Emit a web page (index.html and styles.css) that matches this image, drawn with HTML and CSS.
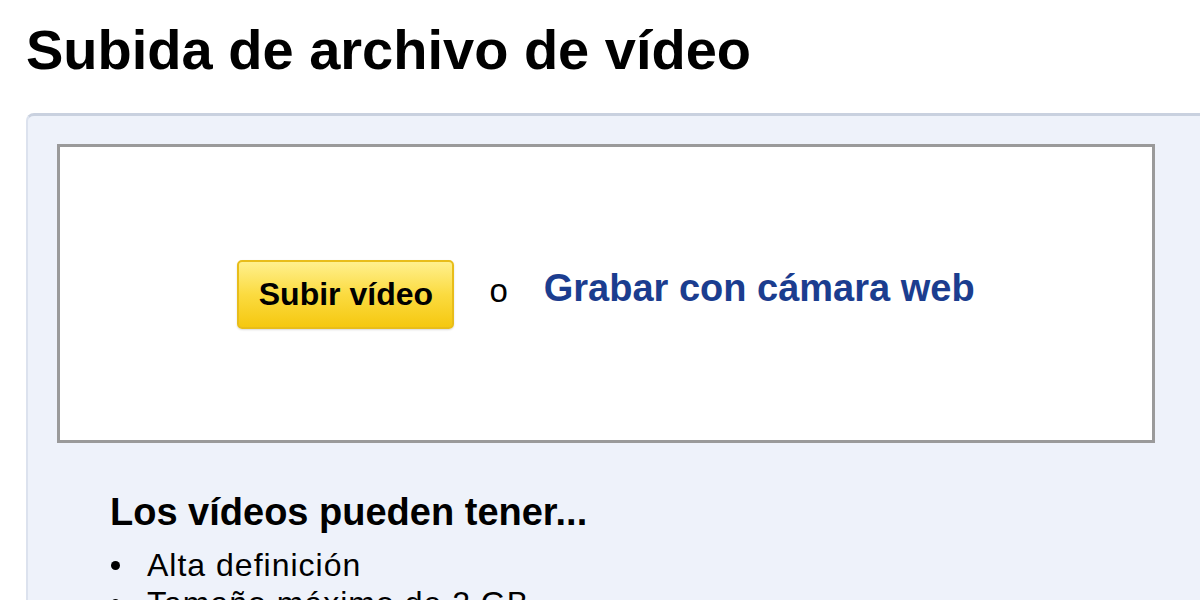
FILE: index.html
```html
<!DOCTYPE html>
<html lang="es">
<head>
<meta charset="utf-8">
<title>Subida de archivo de vídeo</title>
<link rel="stylesheet" href="styles.css">
</head>
<body>
<h1 class="title">Subida de archivo de vídeo</h1>
<div class="panel">
  <div class="dropbox">
    <button class="upload-btn" type="button">Subir vídeo</button>
    <span class="or">o</span>
    <a class="webcam" href="#">Grabar con cámara web</a>
  </div>
  <div class="info">
    <h2 class="info-title">Los vídeos pueden tener...</h2>
    <ul class="info-list">
      <li>Alta definición</li>
      <li>Tamaño máximo de 2 GB</li>
    </ul>
  </div>
</div>
</body>
</html>
```

FILE: styles.css
```css
html, body {
  margin: 0;
  padding: 0;
  background: #ffffff;
  font-family: "Liberation Sans", Arial, sans-serif;
  color: #000;
  overflow: hidden;
  height: 600px;
}
.title {
  margin: 0;
  padding: 18px 0 0 26px;
  font-size: 56px;
  font-weight: bold;
  line-height: 64px;
  height: 113px;
  box-sizing: border-box;
}
.panel {
  margin-left: 26px;
  background: #eef2fa;
  border-top: 3px solid #c9d1df;
  border-left: 2px solid #dce2ee;
  border-top-left-radius: 8px;
  padding: 28px 0 0 29px;
  height: 600px;
}
.dropbox {
  width: 1092px;
  height: 293px;
  background: #ffffff;
  border: 3px solid #9a9a9a;
  display: flex;
  align-items: center;
  justify-content: center;
}
.upload-btn {
  font-family: "Liberation Sans", Arial, sans-serif;
  font-weight: bold;
  font-size: 32px;
  color: #000;
  width: 217px;
  height: 69px;
  border: 2px solid #e8bd1a;
  border-radius: 5px;
  background: linear-gradient(#fff08e, #fbdb40 50%, #f5c810);
  box-shadow: 0 1px 2px rgba(0,0,0,0.15);
  padding: 0;
  margin: 2px 35px 0 0;
}
.or {
  font-size: 33px;
  margin: 0 36px 6px 0;
}
.webcam {
  color: #1b3d8f;
  font-weight: bold;
  font-size: 38px;
  text-decoration: none;
  margin-bottom: 11px;
}
.info {
  padding: 47px 0 0 53px;
}
.info-title {
  margin: 0;
  font-size: 38px;
  font-weight: bold;
  line-height: 44px;
}
.info-list {
  list-style: none;
  margin: 12px 0 0 0;
  padding: 0;
  font-size: 32px;
  line-height: 38px;
  letter-spacing: 1px;
}
.info-list li {
  display: flex;
  align-items: center;
}
.info-list li::before {
  content: "";
  width: 9px;
  height: 9px;
  border-radius: 50%;
  background: #000;
  margin: 0 27px 0 1px;
  flex: none;
}
```
